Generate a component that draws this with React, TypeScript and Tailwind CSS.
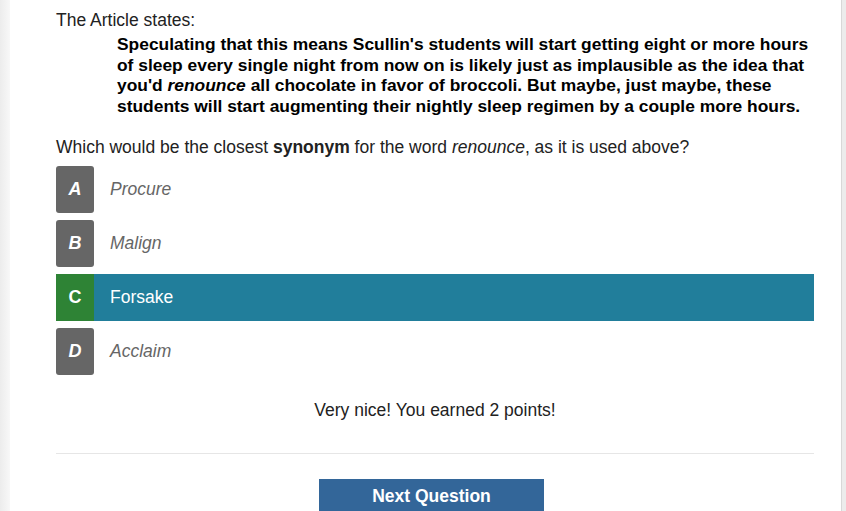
import React from "react";

const options = [
    { letter: "A", text: "Procure" },
    { letter: "B", text: "Malign" },
    { letter: "C", text: "Forsake" },
    { letter: "D", text: "Acclaim" },
];

const selected = 2;

export default function App() {
    return (
        <div className="flex min-h-[511px] bg-[#e8e8e8] font-['Liberation_Sans',Arial,sans-serif] text-[17.5px] text-[#222]">
            <div className="w-[10px] bg-gradient-to-r from-[#ececec] to-[#f8f8f8]" />
            <div className="flex-1 bg-white pl-[46px] pr-[27px] pt-[10px] h-[511px] overflow-hidden">
                <p className="leading-[21px]">The Article states:</p>
                <blockquote className="mt-[3px] ml-[61px] mr-[-10px] text-[17.4px] font-bold leading-[20.7px] text-black">
                    Speculating that this means Scullin's students will start getting eight or more hours of sleep every
                    single night from now on is likely just as implausible as the idea that you'd <i>renounce</i> all
                    chocolate in favor of broccoli. But maybe, just maybe, these students will start augmenting their
                    nightly sleep regimen by a couple more hours.
                </blockquote>
                <p className="mt-[20px] leading-[21px]">
                    Which would be the closest <b>synonym</b> for the word <i>renounce</i>, as it is used above?
                </p>
                <div className="mt-[8px] flex flex-col gap-[7px]">
                    {options.map((o, i) => {
                        const isSel = i === selected;
                        return (
                            <div
                                key={o.letter}
                                className={`flex h-[47px] items-center ${isSel ? "bg-[#217e9b]" : ""}`}
                            >
                                <div
                                    className={`flex h-full w-[38px] items-center justify-center text-[18px] font-bold text-white ${
                                        isSel ? "bg-[#2e8335]" : "rounded-[3px] bg-[#666666] italic"
                                    }`}
                                >
                                    {o.letter}
                                </div>
                                <span className={`ml-[16px] ${isSel ? "text-white" : "italic text-[#666]"}`}>
                                    {o.text}
                                </span>
                            </div>
                        );
                    })}
                </div>
                <p className="mt-[25px] text-center leading-[21px]">Very nice! You earned 2 points!</p>
                <div className="mt-[32px] border-t border-[#e6e6e6]" />
                <div className="mt-[25px] flex justify-center pr-[7px]">
                    <button className="h-[34px] w-[225px] bg-[#336699] text-[17.5px] font-bold text-white">
                        Next Question
                    </button>
                </div>
            </div>
            <div className="w-[5px] border-l border-[#d8d8d8] bg-[#ececec]" />
        </div>
    );
}
